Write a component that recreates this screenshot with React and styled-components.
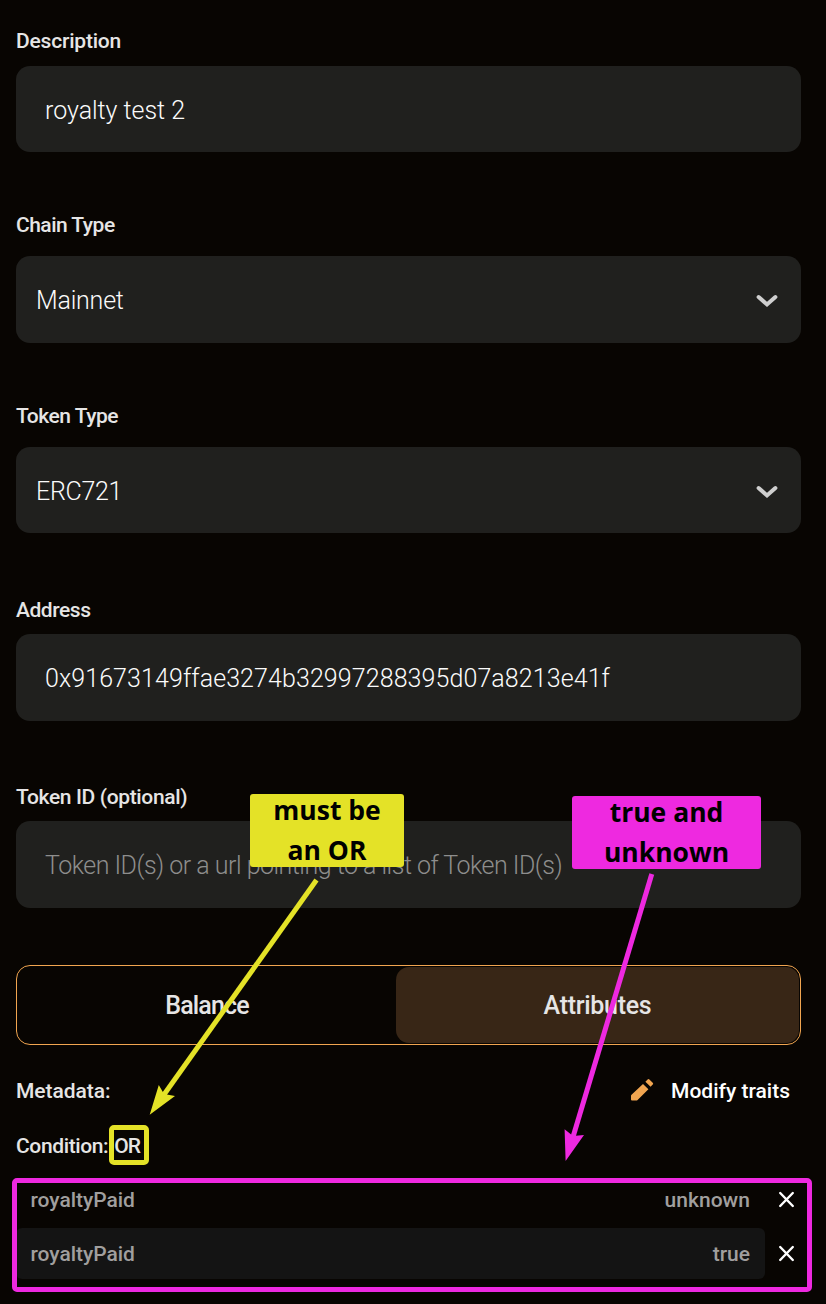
import React from 'react';
import styled, { createGlobalStyle } from 'styled-components';

const YELLOW = '#e4e227';
const MAGENTA = '#ee29e0';
const ORANGE = '#f1a550';

const GlobalStyle = createGlobalStyle`
  * { box-sizing: border-box; }
  body {
    margin: 0;
    background: #080502;
    font-family: Roboto, "Liberation Sans", sans-serif;
  }
  button { font-family: inherit; }
`;

const Page = styled.main`
  position: relative;
  display: flex;
  flex-direction: column;
  width: 826px;
  height: 1304px;
  padding: 29px 25px 0 16px;
  overflow: hidden;
  background: #080502;
`;

const Field = styled.section`
  display: flex;
  flex-direction: column;
  gap: ${(p) => p.$gap}px;
  margin-bottom: ${(p) => p.$after}px;
`;

const Label = styled.label`
  font-size: 21px;
  font-weight: 500;
  line-height: 24px;
  letter-spacing: ${(p) => p.$track || 0}px;
  color: #e6e5e5;
  white-space: pre;
`;

const Control = styled.div`
  display: flex;
  align-items: center;
  justify-content: space-between;
  height: ${(p) => p.$height}px;
  padding: 3px 23px 0 ${(p) => (p.$select ? 20 : 29)}px;
  border-radius: 14px;
  background: #20201e;
`;

const Value = styled.span`
  font-size: 25px;
  font-weight: 350;
  line-height: 30px;
  letter-spacing: ${(p) => p.$track || 0}px;
  color: ${(p) => (p.$muted ? '#8e8e8d' : '#fbfbfb')};
  white-space: nowrap;
`;

const Tabs = styled.div`
  display: grid;
  grid-template-columns: 378px 1fr;
  height: 80px;
  padding: 1px;
  border: 1px solid ${ORANGE};
  border-radius: 14px;
`;

const Tab = styled.button`
  border: 0;
  border-radius: 13px;
  padding: 0;
  background: ${(p) => (p.$active ? '#382616' : 'transparent')};
  color: #e6e5e5;
  font-size: 25px;
  font-weight: 500;
  letter-spacing: ${(p) => p.$track}px;
`;

const MetaRow = styled.div`
  display: flex;
  align-items: center;
  justify-content: space-between;
  height: 24px;
  margin-top: 34px;
  padding-right: 11px;
`;

const ModifyButton = styled.button`
  display: flex;
  align-items: center;
  gap: 16px;
  padding: 0;
  border: 0;
  background: none;
  color: #fff;
  font-size: 21px;
  font-weight: 500;
  line-height: 24px;
  letter-spacing: 0;
`;

const ConditionRow = styled.div`
  display: flex;
  gap: 6px;
  height: 24px;
  margin-top: 31px;
`;

const TraitList = styled.div`
  display: flex;
  flex-direction: column;
  gap: 3px;
  margin-top: 16px;
`;

const TraitRow = styled.div`
  display: flex;
  align-items: center;
  gap: 13px;
`;

const Trait = styled.div`
  display: flex;
  align-items: center;
  justify-content: space-between;
  width: 749px;
  height: 51px;
  padding: 0 15px 0 14.5px;
  border-radius: 6px;
  background: ${(p) => (p.$filled ? '#141414' : 'transparent')};
`;

const TraitText = styled.span`
  font-size: 21px;
  font-weight: 500;
  line-height: 24px;
  letter-spacing: ${(p) => p.$track || 0}px;
  color: #a09f9e;
`;

const RemoveButton = styled.button`
  display: flex;
  padding: 0;
  border: 0;
  background: none;
`;

const Note = styled.div`
  position: absolute;
  left: ${(p) => p.$x}px;
  top: ${(p) => p.$y}px;
  width: ${(p) => p.$width}px;
  height: 73px;
  padding-bottom: 2px;
  display: flex;
  flex-direction: column;
  align-items: center;
  justify-content: center;
  border-radius: 3px;
  background: ${(p) => p.$color};
  color: #000;
  font: 700 26.5px/40px "Open Sans", "Noto Sans", sans-serif;
`;

const NoteLine = styled.span`
  white-space: nowrap;
`;

const Frame = styled.div`
  position: absolute;
  left: ${(p) => p.$x}px;
  top: ${(p) => p.$y}px;
  width: ${(p) => p.$width}px;
  height: ${(p) => p.$height}px;
  border: 5px solid ${(p) => p.$color};
  border-radius: 5px;
  pointer-events: none;
`;

const Arrows = styled.svg`
  position: absolute;
  inset: 0;
  pointer-events: none;
`;

const Chevron = () => (
  <svg width="22" height="14" viewBox="0 0 22 14" fill="none">
    <path d="M2.6 3L11 10.4L19.4 3" stroke="#cfcfcf" strokeWidth="4" strokeLinecap="round" />
  </svg>
);

const Pencil = () => (
  <svg width="24" height="24" viewBox="0 0 24 24" fill={ORANGE}>
    <path d="M0 16.8Q0 16.3 .5 15.8L12 5L17.4 10.2L6.6 20.9Q6 21.5 5.4 21.5H1Q0 21.5 0 20.5Z" />
    <path d="M14.4 2.7L16.6 .5Q17.5 -.4 18.4 .5L21.7 3.8Q22.6 4.7 21.7 5.6L19.6 7.8Z" />
  </svg>
);

const Cross = () => (
  <svg width="17" height="17" viewBox="0 0 17 17" fill="none">
    <path d="M2.2 2L14.8 15M14.8 2L2.2 15" stroke="#fff" strokeWidth="2.4" strokeLinecap="round" />
  </svg>
);

const fields = [
  { label: 'Description', track: -0.2, gap: 13, height: 86, after: 61, value: 'royalty test 2', valueTrack: -0.03 },
  { label: 'Chain Type', track: -0.52, gap: 19, height: 87, after: 61, value: 'Mainnet', valueTrack: -0.2, select: true },
  { label: 'Token Type', track: -0.5, gap: 19, height: 86, after: 65, value: 'ERC721', valueTrack: -0.3, select: true },
  { label: 'Address', track: -0.45, gap: 12, height: 87, after: 64, value: '0x91673149ffae3274b32997288395d07a8213e41f', valueTrack: 0.09 },
  { label: 'Token ID (optional)', track: -0.36, gap: 12, height: 87, after: 57, value: 'Token ID(s) or a url pointing to a list of Token ID(s)', valueTrack: -0.51, muted: true },
];

const traits = [
  { name: 'royaltyPaid', value: 'unknown', track: 0.05 },
  { name: 'royaltyPaid', value: 'true', track: 0 },
];

export default function App() {
  return (
    <>
      <GlobalStyle />
      <Page>
        {fields.map((f) => (
          <Field key={f.label} $gap={f.gap} $after={f.after}>
            <Label $track={f.track}>{f.label}</Label>
            <Control $height={f.height} $select={f.select}>
              <Value $track={f.valueTrack} $muted={f.muted}>{f.value}</Value>
              {f.select && <Chevron />}
            </Control>
          </Field>
        ))}

        <Tabs>
          <Tab $track={-0.83}>Balance</Tab>
          <Tab $active $track={-0.3}>Attributes</Tab>
        </Tabs>

        <MetaRow>
          <Label $track={-0.05}>Metadata:</Label>
          <ModifyButton>
            <Pencil />
            Modify traits
          </ModifyButton>
        </MetaRow>

        <ConditionRow>
          <Label $track={-0.37}>Condition:</Label>
          <Label $track={-0.9}>OR</Label>
        </ConditionRow>

        <TraitList>
          {traits.map((t, i) => (
            <TraitRow key={t.value}>
              <Trait $filled={i % 2 === 1}>
                <TraitText $track={-0.05}>{t.name}</TraitText>
                <TraitText $track={t.track}>{t.value}</TraitText>
              </Trait>
              <RemoveButton aria-label="Remove">
                <Cross />
              </RemoveButton>
            </TraitRow>
          ))}
        </TraitList>

        <Note $x={250} $y={794} $width={154} $color={YELLOW}>
          <NoteLine>must be</NoteLine>
          <NoteLine>an OR</NoteLine>
        </Note>
        <Note $x={572} $y={796} $width={189} $color={MAGENTA}>
          <NoteLine>true and</NoteLine>
          <NoteLine>unknown</NoteLine>
        </Note>
        <Frame $x={109} $y={1125} $width={40} $height={40} $color={YELLOW} />
        <Frame $x={12} $y={1178} $width={800} $height={114} $color={MAGENTA} />
        <Arrows width="826" height="1304" viewBox="0 0 826 1304">
          <path d="M316.5 880L163 1096" stroke={YELLOW} strokeWidth="5" />
          <path d="M149.7 1114.8L158.8 1085L164 1094L175 1096Z" fill={YELLOW} />
          <path d="M651.8 874L573 1137" stroke={MAGENTA} strokeWidth="5" />
          <path d="M565.6 1161L564.6 1129.3L573 1136L584 1135Z" fill={MAGENTA} />
        </Arrows>
      </Page>
    </>
  );
}
